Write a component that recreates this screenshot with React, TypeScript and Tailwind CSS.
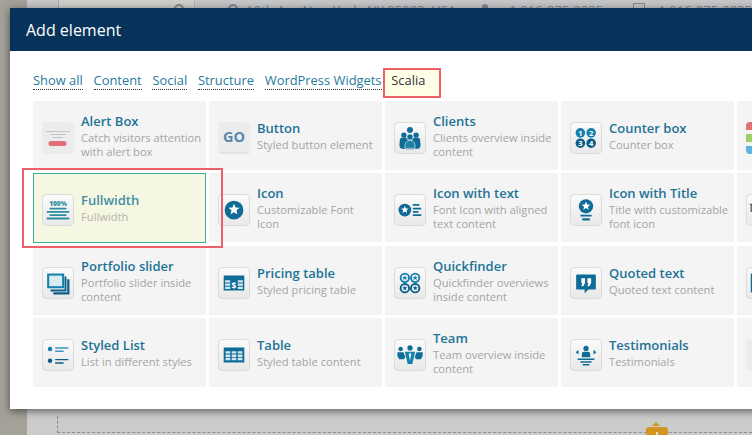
import type { ReactNode } from "react";

const fill = "#0f6c96";

type Item = {
  title: string;
  desc: string;
  icon: ReactNode;
  flat?: boolean;
  active?: boolean;
};

function Star({ cx, cy, r, color = "#fff" }: { cx: number; cy: number; r: number; color?: string }) {
  const pts: string[] = [];
  for (let i = 0; i < 10; i++) {
    const rad = i % 2 === 0 ? r : r * 0.45;
    const a = (Math.PI / 5) * i - Math.PI / 2;
    pts.push(`${(cx + rad * Math.cos(a)).toFixed(2)},${(cy + rad * Math.sin(a)).toFixed(2)}`);
  }
  return <polygon points={pts.join(" ")} fill={color} />;
}

function Person({ x, y, s = 1 }: { x: number; y: number; s?: number }) {
  return (
    <>
      <circle cx={x} cy={y} r={2.6 * s} fill={fill} />
      <path
        d={`M${x - 4 * s} ${y + 8 * s} v${-3 * s} q0 ${-2.4 * s} ${2.4 * s} ${-2.4 * s} h${3.2 * s} q${2.4 * s} 0 ${2.4 * s} ${2.4 * s} v${3 * s} z`}
        fill={fill}
      />
    </>
  );
}

const icons = {
  alert: (
    <svg viewBox="0 0 32 32" className="h-full w-full">
      <path d="M4 9.5h24M8 12.5h16M11 15.5h10" stroke="#c4c4c4" strokeWidth="1" />
      <rect x="6.5" y="19" width="18" height="5" rx="2.5" fill="#e26f78" />
    </svg>
  ),
  go: (
    <div className="flex h-full w-full items-center justify-center border-b-2 border-[#e2e2e2] text-[14.5px] font-bold text-[#5b88ae]">
      GO
    </div>
  ),
  clients: (
    <svg viewBox="0 0 32 32" className="h-full w-full">
      <circle cx="16" cy="7.5" r="3.2" fill={fill} />
      <Person x={9.5} y={13} s={1.1} />
      <Person x={22.5} y={13} s={1.1} />
      <circle cx="16" cy="15" r="3.4" fill={fill} stroke="#f3f3f3" strokeWidth="0.8" />
      <path d="M6 27c-1.5-2-1.5-4-1-6l5-2 3 1h6l3-1 5 2c.5 2 .5 4-1 6-3 1.5-17 1.5-20 0z" fill={fill} />
      <path d="M10.5 27c0-6 2-8.5 5.5-8.5s5.5 2.5 5.5 8.5z" fill="#1d7ea8" stroke="#f3f3f3" strokeWidth="0.7" />
    </svg>
  ),
  counter: (
    <svg viewBox="0 0 32 32" className="h-full w-full">
      {[
        ["1", 10, 10.5],
        ["2", 21.5, 10.5],
        ["3", 10, 21.5],
        ["4", 21.5, 21.5],
      ].map(([n, x, y]) => (
        <g key={n as string}>
          <circle cx={x as number} cy={y as number} r="5.1" fill={n === "1" || n === "2" ? "#1480ad" : "#0b5e86"} />
          <text
            x={x as number}
            y={(y as number) + 3}
            fontSize="8"
            fontWeight="700"
            textAnchor="middle"
            fill="#fff"
            fontFamily="'Open Sans', sans-serif"
          >
            {n}
          </text>
        </g>
      ))}
    </svg>
  ),
  bars: (
    <svg viewBox="0 0 32 32" className="h-full w-full">
      <rect x="0" y="0" width="32" height="32" fill="#f4f4f4" />
      <rect x="0" y="0" width="32" height="8" fill="#e26f78" />
      <rect x="0" y="12" width="32" height="8" fill="#9ccf6a" />
      <rect x="0" y="24" width="32" height="8" fill="#5cb4dc" />
    </svg>
  ),
  fullwidth: (
    <svg viewBox="0 0 32 32" className="h-full w-full">
      <text
        x="16"
        y="11.5"
        fontSize="7"
        fontWeight="800"
        textAnchor="middle"
        fill="#2b8ea0"
        fontFamily="'Open Sans', sans-serif"
      >
        100%
      </text>
      <path d="M7 14.5h18M4 18h24M7 21.5h18M4 25h24" stroke="#2b8ea0" strokeWidth="2" />
    </svg>
  ),
  icon: (
    <svg viewBox="0 0 32 32" className="h-full w-full">
      <circle cx="16" cy="16" r="10" fill={fill} />
      <Star cx={16} cy={15.5} r={6.2} />
    </svg>
  ),
  iconText: (
    <svg viewBox="0 0 32 32" className="h-full w-full">
      <circle cx="10.5" cy="16" r="6.8" fill={fill} />
      <Star cx={10.5} cy={15.8} r={4.2} />
      <path d="M19 10.5h7M19 14.5h9M19 18h6M19 21.5h9" stroke={fill} strokeWidth="2" />
    </svg>
  ),
  iconTitle: (
    <svg viewBox="0 0 32 32" className="h-full w-full">
      <circle cx="16" cy="12" r="7.6" fill={fill} />
      <Star cx={16} cy={11.8} r={4.8} />
      <path d="M10 22h12" stroke={fill} strokeWidth="2" />
      <path d="M12 26h8" stroke={fill} strokeWidth="2.4" />
    </svg>
  ),
  partial: (
    <svg viewBox="0 0 32 32" className="h-full w-full">
      <path d="M3 10h3M4.5 10v8" stroke="#4d5a66" strokeWidth="1.4" />
    </svg>
  ),
  portfolio: (
    <svg viewBox="0 0 32 32" className="h-full w-full">
      <path d="M11 27h16V12" fill="none" stroke="#0b5e86" strokeWidth="2.4" />
      <path d="M8 24h16V9" fill="none" stroke="#0b5e86" strokeWidth="2" />
      <rect x="5.5" y="7" width="16" height="13.5" fill="#d9eaf2" stroke="#1480ad" strokeWidth="2.2" />
    </svg>
  ),
  pricing: (
    <svg viewBox="0 0 32 32" className="h-full w-full">
      <rect x="5" y="8" width="22" height="16" fill={fill} />
      <path
        d="M6.5 13h5.5v2.5H6.5zM6.5 16.5h5.5V19H6.5zM6.5 20h5.5v2.5H6.5zM20 13h5.5v2.5H20zM20 16.5h5.5V19H20zM20 20h5.5v2.5H20z"
        fill="#d5e8f1"
      />
      <text
        x="16"
        y="22"
        fontSize="9"
        fontWeight="700"
        textAnchor="middle"
        fill="#fff"
        fontFamily="'Open Sans', sans-serif"
      >
        $
      </text>
    </svg>
  ),
  quickfinder: (
    <svg viewBox="0 0 32 32" className="h-full w-full">
      {[
        [10.5, 10.5, "#1480ad"],
        [21.5, 10.5, "#1480ad"],
        [10.5, 21.5, "#0b5e86"],
        [21.5, 21.5, "#0b5e86"],
      ].map(([x, y, c]) => (
        <g key={`${x}-${y}`}>
          <circle cx={x as number} cy={y as number} r="5.5" fill={c as string} />
          <circle cx={x as number} cy={y as number} r="3.5" fill="#eef3f6" />
          <Star cx={x as number} cy={y as number} r={2.8} color={c as string} />
        </g>
      ))}
    </svg>
  ),
  quoted: (
    <svg viewBox="0 0 32 32" className="h-full w-full">
      <path d="M6.5 7h19a1 1 0 0 1 1 1v14a1 1 0 0 1-1 1h-7l-4 4v-4h-8a1 1 0 0 1-1-1V8a1 1 0 0 1 1-1z" fill={fill} />
      <path d="M11 11h4v5l-2 3.5h-2l1-3.5h-1zM17.5 11h4v5l-2 3.5h-2l1-3.5h-1z" fill="#fff" />
    </svg>
  ),
  partialTeal: (
    <svg viewBox="0 0 32 32" className="h-full w-full">
      <rect x="4" y="6" width="24" height="20" fill={fill} />
    </svg>
  ),
  list: (
    <svg viewBox="0 0 32 32" className="h-full w-full">
      <circle cx="7.5" cy="9.5" r="2.4" fill="#1480ad" />
      <circle cx="7.5" cy="22" r="2.4" fill="#0b5e86" />
      <path d="M13 8.5h14M13 12h9" stroke="#3a97be" strokeWidth="1.4" />
      <path d="M13 21h14M13 24.5h9" stroke="#0b5e86" strokeWidth="1.4" />
    </svg>
  ),
  table: (
    <svg viewBox="0 0 32 32" className="h-full w-full">
      <rect x="5" y="8" width="22" height="16" fill={fill} />
      <path
        d="M7 12h5v2.5H7zM13.5 12h5v2.5h-5zM20 12h5v2.5h-5zM7 15.5h5V18H7zM13.5 15.5h5V18h-5zM20 15.5h5V18h-5zM7 19h5v2.5H7zM13.5 19h5v2.5h-5zM20 19h5v2.5h-5z"
        fill="#d5e8f1"
      />
    </svg>
  ),
  team: (
    <svg viewBox="0 0 32 32" className="h-full w-full">
      <circle cx="6" cy="9.5" r="2.4" fill={fill} />
      <circle cx="26" cy="9.5" r="2.4" fill={fill} />
      <circle cx="16" cy="8.5" r="2.8" fill={fill} />
      <path d="M2.5 13h6.5l2 5-1.5 2.5h-5L2.5 17z" fill={fill} />
      <path d="M29.5 13H23l-2 5 1.5 2.5h5l2-3.5z" fill={fill} />
      <path d="M10.5 12.5h11l-1.5 6.5-1.5 6.5h-5L12 19z" fill="#1480ad" />
      <path d="M16 13l-1.2 2.5L16 22l1.2-6.5z" fill="#eef3f6" />
    </svg>
  ),
  testimonials: (
    <svg viewBox="0 0 32 32" className="h-full w-full">
      <circle cx="16" cy="9" r="2.8" fill={fill} />
      <path d="M11.5 18.5v-3.5q0-2.5 2.5-2.5h4q2.5 0 2.5 2.5v3.5z" fill={fill} />
      <path d="M5 13l3-2.5v5zM27 13l-3-2.5v5z" fill={fill} />
      <path d="M7 20.5h18M10 23.5h12M12.5 26.5h7" stroke={fill} strokeWidth="1.6" />
    </svg>
  ),
  empty: <div />,
};

const items: Item[] = [
  { title: "Alert Box", desc: "Catch visitors attention with alert box", icon: icons.alert, flat: true },
  { title: "Button", desc: "Styled button element", icon: icons.go, flat: true },
  { title: "Clients", desc: "Clients overview inside content", icon: icons.clients },
  { title: "Counter box", desc: "Counter box", icon: icons.counter },
  { title: "Divider", desc: "Horizontal divider", icon: icons.bars, flat: true },
  { title: "Fullwidth", desc: "Fullwidth", icon: icons.fullwidth, active: true },
  { title: "Icon", desc: "Customizable Font Icon", icon: icons.icon },
  { title: "Icon with text", desc: "Font Icon with aligned text content", icon: icons.iconText },
  { title: "Icon with Title", desc: "Title with customizable font icon", icon: icons.iconTitle },
  { title: "Title", desc: "Styled title", icon: icons.partial },
  { title: "Portfolio slider", desc: "Portfolio slider inside content", icon: icons.portfolio },
  { title: "Pricing table", desc: "Styled pricing table", icon: icons.pricing },
  { title: "Quickfinder", desc: "Quickfinder overviews inside content", icon: icons.quickfinder },
  { title: "Quoted text", desc: "Quoted text content", icon: icons.quoted },
  { title: "Slider", desc: "Gallery slider", icon: icons.partialTeal },
  { title: "Styled List", desc: "List in different styles", icon: icons.list },
  { title: "Table", desc: "Styled table content", icon: icons.table },
  { title: "Team", desc: "Team overview inside content", icon: icons.team },
  { title: "Testimonials", desc: "Testimonials", icon: icons.testimonials },
  { title: "Video", desc: "Video content", icon: icons.empty, flat: true },
];

const tabs = ["Show all", "Content", "Social", "Structure", "WordPress Widgets"];

function ElementCard({ item }: { item: Item }) {
  return (
    <div
      className={`flex h-[69px] items-center gap-[7px] ${
        item.active ? "h-[70px] border border-[#35b0a0] bg-[#f6f7e2] pl-[8px]" : "bg-[#f4f4f4] pl-[9px] pt-[1px]"
      }`}
    >
      <div
        className={`mt-[3px] h-[32px] w-[32px] shrink-0 overflow-hidden rounded-[4px] ${
          item.flat ? "bg-[#ececec]" : "border border-[#dcdcdc] bg-gradient-to-b from-[#fafafa] to-[#e9e9e9]"
        }`}
      >
        {item.icon}
      </div>
      <div className="min-w-0">
        <div
          className={`text-[13px] leading-[16px] font-semibold whitespace-nowrap ${
            item.active ? "text-[#3f8fa3]" : "text-[#1d7396]"
          }`}
        >
          {item.title}
        </div>
        <div
          className={`mt-[2px] max-w-[121px] text-[11.2px] leading-[14px] ${
            item.active ? "text-[#b4b4a8]" : "text-[#a5a5a5]"
          }`}
        >
          {item.desc}
        </div>
      </div>
    </div>
  );
}

export default function App() {
  return (
    <div className="relative h-[435px] w-[752px] overflow-hidden bg-[#a3a198] font-['Open_Sans',sans-serif]">
      {/* dimmed page behind the dialog */}
      <div className="ml-[27px] h-[435px] bg-[#cbcbcb]">
        <div className="flex h-[8px] items-start overflow-hidden bg-[#c5c6c8] text-[13px] leading-[16px] text-[#85878a]">
          <div className="h-full w-[45px] border-r border-[#a9a9a9]" />
          <div className="flex h-full w-[189px] justify-end border-r border-[#b5b5b5] bg-[#cfcecb] pr-[10px] pt-[4px]">
            <div className="h-[10px] w-[10px] rounded-full border-2 border-[#85878a]" />
          </div>
          <div className="ml-[33px] mt-[4px] h-[10px] w-[10px] shrink-0 rounded-full border-2 border-[#85878a]" />
          <div className="pl-[8px] pt-[2px] whitespace-nowrap">10th Ave New York, NY 95023, USA</div>
          <div className="ml-[26px] mt-[4px] h-[10px] w-[6px] shrink-0 rounded-full bg-[#85878a]" />
          <div className="pl-[14px] pt-[2px] whitespace-nowrap">+1 916-875-2235</div>
          <div className="ml-[30px] mt-[3px] h-[10px] w-[12px] shrink-0 border border-[#85878a]" />
          <div className="pl-[6px] pt-[2px] whitespace-nowrap">+1 916-875-2235</div>
        </div>
        <div className="ml-[30px] mt-[408px] h-[17px] border-b border-l border-dashed border-[#8f8f8f]" />
      </div>

      {/* orange handle peeking out below the dialog */}
      <div className="absolute left-[646px] top-[427px] flex h-[8px] w-[22px] justify-center rounded-t-[3px] bg-[#d2951f] pt-[5px]">
        <div className="h-[3px] w-[2px] bg-[#f0e2c0]" />
      </div>
      <div className="absolute left-[652px] top-[422px] h-0 w-0 border-x-[4px] border-b-[4px] border-x-transparent border-b-[#d2951f]" />

      {/* dialog */}
      <div className="absolute left-[10px] top-[8px] h-[401px] w-[900px] bg-white shadow-[0_2px_8px_rgba(0,0,0,0.55)]">
        <div className="flex h-[43px] items-center bg-[#07335a] pl-[16px] text-[16px] text-white">Add element</div>
        <div className="pl-[23px]">
          <div className="flex h-[50px] items-start gap-[10.8px] pt-[20px] text-[12.9px] leading-[18px]">
            {tabs.map((t) => (
              <span key={t} className="border-b border-dotted border-[#333] text-[#1f7a9c]">
                {t}
              </span>
            ))}
            <span className="-mt-[3px] -ml-[9px] h-[30px] border-2 border-[#ef5f68] bg-[#ffffe8] pt-[1px] pr-[14px] pl-[6px] text-[#333]">
              Scalia
            </span>
          </div>
          <div className="grid grid-cols-[repeat(5,173px)] gap-[3px]">
            {items.map((item) => (
              <ElementCard key={item.title} item={item} />
            ))}
          </div>
        </div>
      </div>

      {/* annotation box round the selected card */}
      <div className="absolute left-[22px] top-[168px] h-[80px] w-[201px] border-2 border-[#ef5f68]" />
    </div>
  );
}
